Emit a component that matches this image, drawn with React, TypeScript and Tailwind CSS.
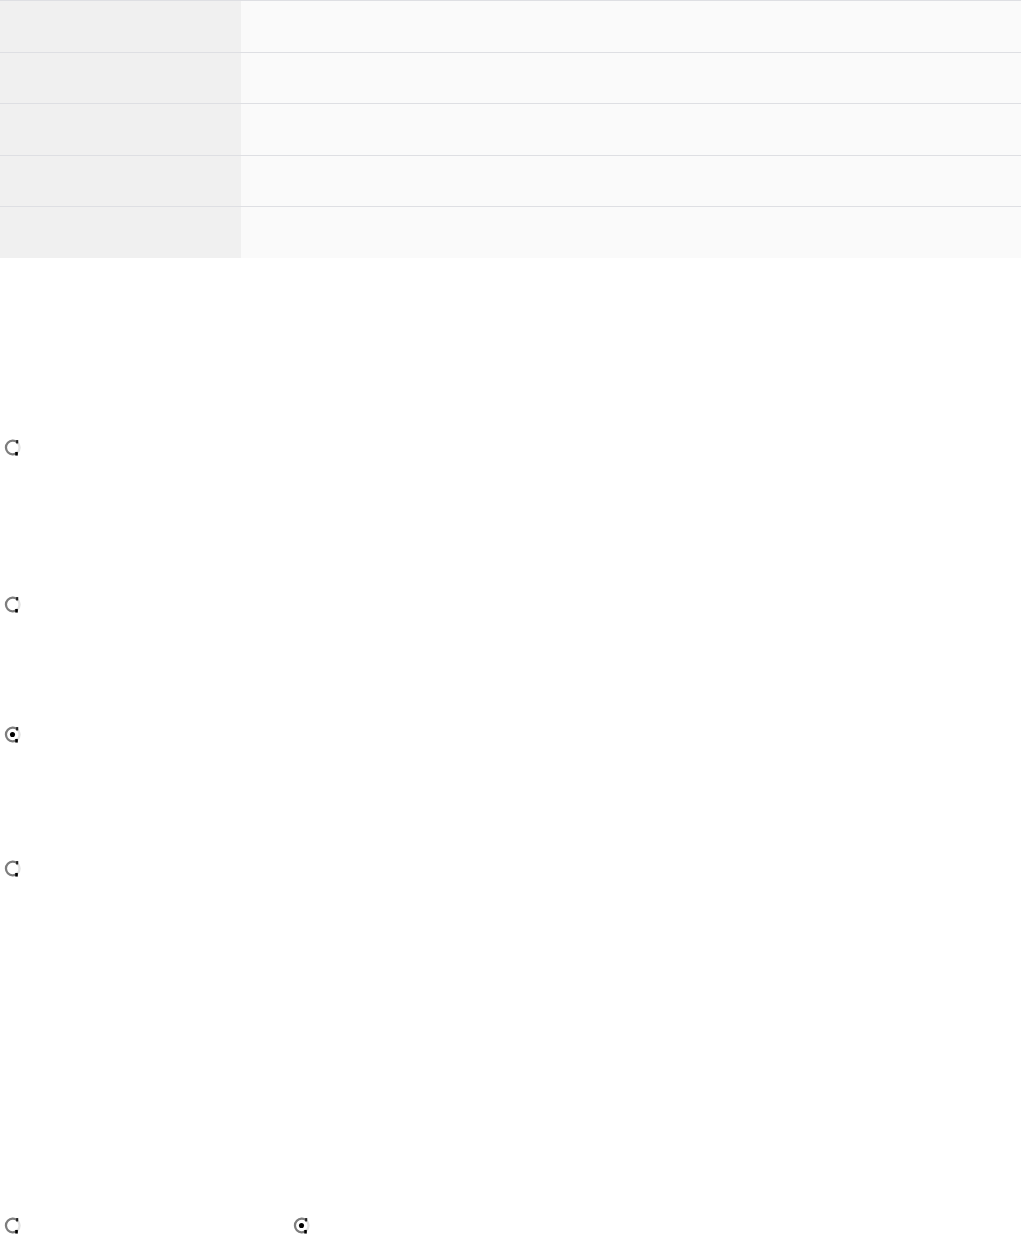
import React from "react";

const rows = [0, 1, 2, 3, 4];

function Radio({ checked = false }: { checked?: boolean }) {
  return (
    <svg width="17" height="17" viewBox="0 0 16 16" className="block">
      <path d="M12.5 3.2 A6.4 6.4 0 1 0 12.5 12.8" fill="none" stroke="#7d7d7d" strokeWidth="2.2" />
      <path d="M12.5 12.8 A6.4 6.4 0 0 0 12.5 3.2" fill="none" stroke="#e2e2e2" strokeWidth="2.2" />
      <circle cx="8" cy="8" r="4.6" fill="#fff" />
      <rect x="11.4" y="1" width="2" height="3.2" fill="#222" />
      <rect x="10.6" y="12.2" width="2.4" height="3.4" fill="#000" />
      {checked && <circle cx="8" cy="8" r="2.4" fill="#000" />}
    </svg>
  );
}

export default function App() {
  return (
    <div className="min-h-[1246px] bg-white font-['Liberation_Sans',sans-serif]">
      <div className="w-[1021px]">
        {rows.map((r) => (
          <div key={r} className="flex h-[51.5px] border-t border-[#dedfe3]">
            <div className="w-[241px] bg-[#f0f0f0]" />
            <div className="flex-1 bg-[#fafafa]" />
          </div>
        ))}
      </div>

      <div className="pl-[4px]">
        <div className="pt-[181px]">
          <Radio />
        </div>
        <div className="pt-[140px]">
          <Radio />
        </div>
        <div className="pt-[113px]">
          <Radio checked />
        </div>
        <div className="pt-[117px]">
          <Radio />
        </div>
        <div className="flex gap-[272px] pt-[340px]">
          <Radio />
          <Radio checked />
        </div>
      </div>
    </div>
  );
}
